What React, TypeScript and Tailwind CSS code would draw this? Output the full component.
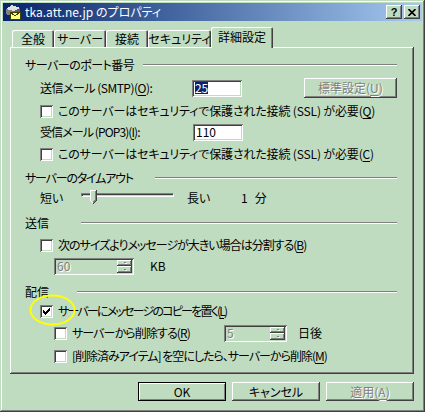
import React from 'react'

// Win2000-style bevels, face colour #c0dcc0
const raised = 'shadow-[inset_-1px_-1px_#404040,inset_1px_1px_#ffffff,inset_-2px_-2px_#808080]'
const sunken =
  'shadow-[inset_1px_1px_#808080,inset_-1px_-1px_#ffffff,inset_2px_2px_#404040,inset_-2px_-2px_#c0dcc0]'
const dim = 'text-[#808080] [text-shadow:1px_1px_0_#ffffff]'

const Key = ({ k }: { k: string }) => <span className="underline underline-offset-[2px]">{k}</span>

const Check = ({ on }: { on?: boolean }) => (
  <span className={`w-[13px] h-[13px] shrink-0 bg-white flex items-center justify-center ${sunken}`}>
    {on && (
      <svg width="7" height="7" viewBox="0 0 7 7" shapeRendering="crispEdges">
        <rect x="6" y="0" width="1" height="1" />
        <rect x="5" y="1" width="2" height="1" />
        <rect x="0" y="2" width="1" height="1" />
        <rect x="4" y="2" width="3" height="1" />
        <rect x="0" y="3" width="2" height="1" />
        <rect x="3" y="3" width="3" height="1" />
        <rect x="0" y="4" width="5" height="1" />
        <rect x="1" y="5" width="3" height="1" />
        <rect x="2" y="6" width="1" height="1" />
      </svg>
    )}
  </span>
)

const Group = ({ label, labelClass }: { label: string; labelClass: string }) => (
  <div className="flex items-center h-[18px]">
    <span className={labelClass}>{label}</span>
    <div className="flex-1 h-[2px] border-t border-t-[#808080] border-b border-b-white" />
  </div>
)

const Spinner = ({ value, className }: { value: string; className: string }) => (
  <div className={`h-[17px] bg-[#c0dcc0] flex items-center pl-[3px] pr-[2px] ${sunken} ${className}`}>
    <span className={`flex-1 ${dim}`}>{value}</span>
    <div className="flex flex-col w-[15px] h-[13px]">
      <div className={`flex-1 flex items-center justify-center ${raised}`}>
        <span className="w-[2px] h-[1px] bg-[#808080] shadow-[1px_1px_#fff]" />
      </div>
      <div className={`flex-1 flex items-center justify-center ${raised}`}>
        <span className="w-[2px] h-[1px] bg-[#808080] shadow-[1px_1px_#fff]" />
      </div>
    </div>
  </div>
)

const Tab = ({ label, className }: { label: string; className: string }) => (
  <div
    className={`h-[17px] flex items-center justify-center rounded-t-[2px] shadow-[inset_1px_1px_#ffffff,inset_-1px_0_#404040,inset_-2px_0_#808080] ${className}`}
  >
    {label}
  </div>
)

const MailIcon = () => (
  <svg width="16" height="16" viewBox="0 0 16 16" shapeRendering="crispEdges">
    <path d="M1 5 L7 1 L15 4 L15 9 L9 13 L1 10 Z" fill="#808080" />
    <path d="M1 5 L7 1 L15 4 L9 7 Z" fill="#e0e0e0" />
    <path d="M9 7 L15 4 L15 9 L9 13 Z" fill="#606060" />
    <rect x="5" y="8" width="10" height="7" fill="#ffff80" stroke="#404000" strokeWidth="1" />
    <path d="M5.5 8.5 L10 12 L14.5 8.5" fill="none" stroke="#404000" strokeWidth="1" />
  </svg>
)

const Button = ({
  children,
  className,
  def,
}: {
  children: React.ReactNode
  className: string
  def?: boolean
}) => (
  <div
    className={`h-[19px] flex items-center justify-center bg-[#c0dcc0] ${
      def
        ? 'shadow-[inset_0_0_0_1px_#000000,inset_2px_2px_#ffffff,inset_-2px_-2px_#808080]'
        : raised
    } ${className}`}
  >
    {children}
  </div>
)

export default function App() {
  return (
    <div className="relative w-[425px] h-[412px] bg-[#c0dcc0] p-[3px] flex flex-col text-black text-[12px] leading-none font-['Noto_Sans_CJK_JP',sans-serif] [font-feature-settings:'palt'] shadow-[inset_-1px_-1px_#404040,inset_1px_1px_#c0dcc0,inset_-2px_-2px_#808080,inset_2px_2px_#ffffff]">
      {/* title bar */}
      <div className="h-[18px] flex items-center bg-gradient-to-r from-[#0a246a] to-[#a6caf0] pl-[2px] pr-[2px]">
        <MailIcon />
        <span className="ml-[4px] text-white">tka.att.ne.jp のプロパティ</span>
        <div className="ml-auto flex gap-[2px]">
          <div className={`w-[16px] h-[14px] bg-[#c0dcc0] flex items-center justify-center font-bold text-[11px] font-['Liberation_Sans',sans-serif] ${raised}`}>
            ?
          </div>
          <div className={`w-[16px] h-[14px] bg-[#c0dcc0] flex items-center justify-center ${raised}`}>
            <svg width="8" height="7" viewBox="0 0 8 7">
              <path d="M0.5 0 L7.5 7 M7.5 0 L0.5 7" stroke="#000" strokeWidth="1.6" />
            </svg>
          </div>
        </div>
      </div>

      {/* tabs */}
      <div className="flex items-end h-[20px] mt-[6px] ml-[9px]">
        <Tab label="全般" className="w-[42px]" />
        <Tab label="サーバー" className="w-[52px]" />
        <Tab label="接続" className="w-[42px]" />
        <Tab label="セキュリティ" className="w-[63px]" />
        <div className="relative z-10 w-[62px] h-[21px] -mb-[1px] bg-[#c0dcc0] flex items-center justify-center pb-[2px] rounded-t-[2px] shadow-[inset_1px_1px_#ffffff,inset_-1px_0_#404040,inset_-2px_0_#808080]">
          詳細設定
        </div>
      </div>

      {/* panel */}
      <div className={`ml-[7px] w-[404px] h-[327px] flex flex-col pt-[9px] pl-[15px] pr-[17px] ${raised}`}>
        <Group label="サーバーのポート番号" labelClass="w-[118px] tracking-[-0.5px]" />

        <div className="mt-[3px] h-[22px] flex items-center pl-[15px]">
          <span className="w-[153px] tracking-[-0.5px]">
            送信メール (SMTP)(<Key k="O" />):
          </span>
          <div className={`w-[50px] h-[17px] bg-white flex items-center pl-[3px] ${sunken}`}>
            <span className="bg-[#0a246a] text-white">25</span>
          </div>
          <div className={`ml-[62px] w-[94px] h-[20px] flex items-center justify-center ${raised} ${dim}`}>
            標準設定(<Key k="U" />)
          </div>
        </div>

        <div className="mt-[3px] h-[18px] flex items-center gap-[5px] pl-[15px]">
          <Check />
          <span className="tracking-[-0.15px]">
            このサーバーはセキュリティで保護された接続 (SSL) が必要(<Key k="Q" />)
          </span>
        </div>

        <div className="mt-[3px] h-[18px] flex items-center pl-[15px]">
          <span className="w-[153px] tracking-[-0.9px]">
            受信メール (POP3)(<Key k="I" />):
          </span>
          <div className={`w-[50px] h-[17px] bg-white flex items-center pl-[3px] ${sunken}`}>110</div>
        </div>

        <div className="mt-[4px] h-[18px] flex items-center gap-[5px] pl-[15px]">
          <Check />
          <span className="tracking-[-0.15px]">
            このサーバーはセキュリティで保護された接続 (SSL) が必要(<Key k="C" />)
          </span>
        </div>

        <div className="mt-[6px]">
          <Group label="サーバーのタイムアウト" labelClass="w-[130px] tracking-[-1.2px]" />
        </div>

        <div className="mt-[1px] h-[20px] flex items-center pl-[15px]">
          <span className="w-[41px]">短い</span>
          <div className="relative w-[93px] h-[20px]">
            <div className="absolute left-0 right-0 top-[5px] h-[4px] border-t border-l border-[#808080] border-b border-r border-b-white border-r-white bg-[#c0dcc0] shadow-[inset_1px_1px_#404040]" />
            <svg className="absolute left-[9px] top-[2px]" width="7" height="15" viewBox="0 0 7 15" shapeRendering="crispEdges">
              <path d="M0 0 H6 V10 L3 13 L0 10 Z" fill="#c0dcc0" />
              <path d="M0 0 H6 M0 0 V10 L3 13" fill="none" stroke="#ffffff" strokeWidth="1" />
              <path d="M6.5 0 V10.5 L3 14" fill="none" stroke="#404040" strokeWidth="1" />
              <path d="M5.5 1 V10 L3 12.5" fill="none" stroke="#808080" strokeWidth="1" />
            </svg>
          </div>
          <span className="ml-[13px] w-[54px]">長い</span>
          <span>1</span>
          <span className="ml-[7px]">分</span>
        </div>

        <div className="mt-[6px]">
          <Group label="送信" labelClass="w-[56px]" />
        </div>

        <div className="mt-[4px] h-[18px] flex items-center gap-[5px] pl-[15px]">
          <Check />
          <span className="tracking-[-1px]">
            次のサイズよりメッセージが大きい場合は分割する(<Key k="B" />)
          </span>
        </div>

        <div className="mt-[3px] h-[18px] flex items-center pl-[29px]">
          <Spinner value="60" className="w-[80px]" />
          <span className="ml-[16px]">KB</span>
        </div>

        <div className="mt-[8px]">
          <Group label="配信" labelClass="w-[52px]" />
        </div>

        <div className="mt-[1px] h-[18px] flex items-center gap-[5px] pl-[15px]">
          <Check on />
          <span className="tracking-[-1.8px]">
            サーバーにメッセージのコピーを置く(<Key k="L" />)
          </span>
        </div>

        <div className="mt-[4px] h-[18px] flex items-center pl-[29px]">
          <Check />
          <span className="ml-[5px] w-[152px] tracking-[-0.9px]">
            サーバーから削除する(<Key k="R" />)
          </span>
          <Spinner value="5" className="w-[63px]" />
          <span className="ml-[11px]">日後</span>
        </div>

        <div className="mt-[5px] h-[18px] flex items-center gap-[5px] pl-[29px]">
          <Check />
          <span className="tracking-[-1px]">
            [削除済みアイテム] を空にしたら、サーバーから削除(<Key k="M" />)
          </span>
        </div>
      </div>

      {/* dialog buttons */}
      <div className="mt-[8px] flex justify-end gap-[6px] pr-[8px]">
        <Button def className="w-[88px]">
          OK
        </Button>
        <Button className="w-[88px]">キャンセル</Button>
        <Button className={`w-[88px] ${dim}`}>
          適用(<Key k="A" />)
        </Button>
      </div>

      {/* yellow annotation circle */}
      <svg className="absolute left-[29px] top-[294px]" width="47" height="32" viewBox="0 0 47 32">
        <ellipse cx="23.5" cy="16" rx="22" ry="14.5" fill="none" stroke="#ffff00" strokeWidth="2" />
      </svg>
    </div>
  )
}
